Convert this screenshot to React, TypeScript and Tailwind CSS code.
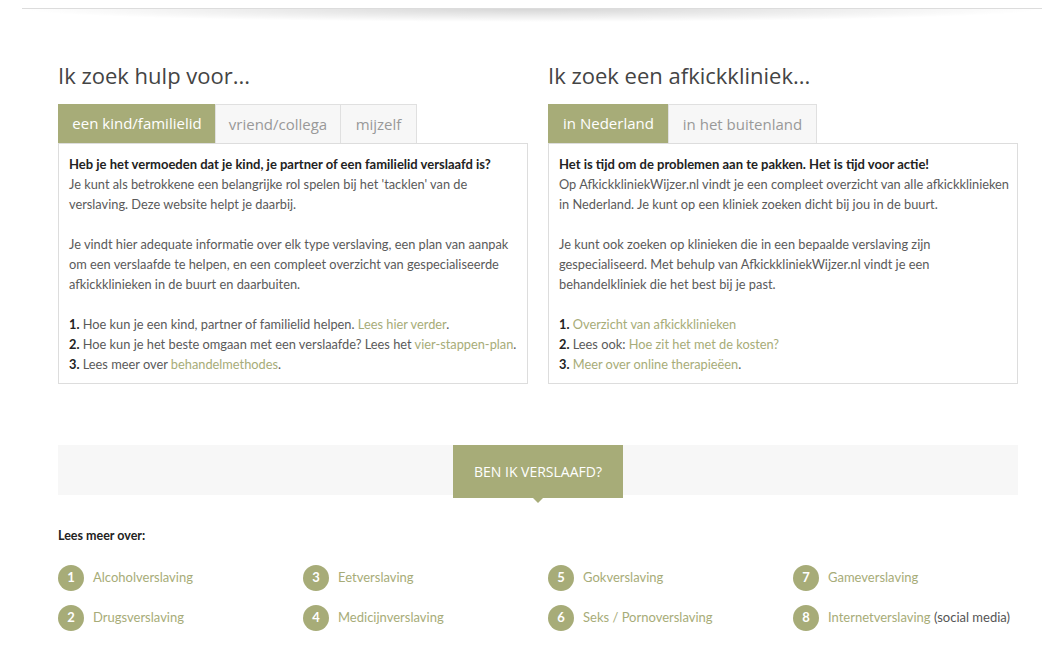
import React from 'react';

const green = 'text-[#a7ac78]';

function Tabs({ tabs }: { tabs: { label: string; w: string }[] }) {
  return (
    <div className="flex h-[39px] items-end">
      {tabs.map((t, i) =>
        i === 0 ? (
          <div
            key={t.label}
            className={`${t.w} flex h-[39px] items-center justify-center bg-[#a7ac78] text-[15px] text-white`}
          >
            {t.label}
          </div>
        ) : (
          <div
            key={t.label}
            className={`${t.w} -ml-px flex h-[39px] items-center justify-center border border-b-0 border-[#e0e0e0] bg-[#f7f7f7] text-[15px] text-[#999] first:ml-0`}
          >
            {t.label}
          </div>
        ),
      )}
    </div>
  );
}

function Box({ children }: { children: React.ReactNode }) {
  return (
    <div className="h-[241px] whitespace-nowrap border border-[#dddddd] px-[10px] pt-[10px] font-['Lato',sans-serif] text-[12.8px] leading-[20px] text-[#5a5a5a]">
      {children}
    </div>
  );
}

const items = [
  ['1', 'Alcoholverslaving', ''],
  ['3', 'Eetverslaving', ''],
  ['5', 'Gokverslaving', ''],
  ['7', 'Gameverslaving', ''],
  ['2', 'Drugsverslaving', ''],
  ['4', 'Medicijnverslaving', ''],
  ['6', 'Seks / Pornoverslaving', ''],
  ['8', 'Internetverslaving', ' (social media)'],
];

export default function App() {
  return (
    <div className="min-h-[657px] bg-white font-['Open_Sans',sans-serif]">
      <div className="flex justify-center pt-[8px]">
        <div className="h-[14px] w-[1020px] border-t border-[#dcdcdc] bg-[radial-gradient(ellipse_50%_100%_at_50%_0%,rgba(0,0,0,0.16),transparent)]" />
      </div>

      <div className="ml-[58px] w-[960px]">
        <div className="mt-[38px] grid grid-cols-2 gap-[20px]">
          <div>
            <h2 className="mb-[14px] text-[22px] leading-[30px] text-[#444]">Ik zoek hulp voor...</h2>
            <Tabs
              tabs={[
                { label: 'een kind/familielid', w: 'w-[158px]' },
                { label: 'vriend/collega', w: 'w-[126px]' },
                { label: 'mijzelf', w: 'w-[77px]' },
              ]}
            />
            <Box>
              <p className="text-[13px] font-bold text-[#222]">
                Heb je het vermoeden dat je kind, je partner of een familielid verslaafd is?
              </p>
              <p>
                Je kunt als betrokkene een belangrijke rol spelen bij het 'tacklen' van de
                <br />
                verslaving. Deze website helpt je daarbij.
              </p>
              <p className="mt-[20px]">
                Je vindt hier adequate informatie over elk type verslaving, een plan van aanpak
                <br />
                om een verslaafde te helpen, en een compleet overzicht van gespecialiseerde
                <br />
                afkickklinieken in de buurt en daarbuiten.
              </p>
              <p className="mt-[20px]">
                <b className="text-[#222]">1.</b> Hoe kun je een kind, partner of familielid helpen.{' '}
                <span className={green}>Lees hier verder</span>.
                <br />
                <b className="text-[#222]">2.</b> Hoe kun je het beste omgaan met een verslaafde? Lees het{' '}
                <span className={green}>vier-stappen-plan</span>.
                <br />
                <b className="text-[#222]">3.</b> Lees meer over <span className={green}>behandelmethodes</span>.
              </p>
            </Box>
          </div>

          <div>
            <h2 className="mb-[14px] text-[22px] leading-[30px] text-[#444]">Ik zoek een afkickkliniek...</h2>
            <Tabs
              tabs={[
                { label: 'in Nederland', w: 'w-[121px]' },
                { label: 'in het buitenland', w: 'w-[149px]' },
              ]}
            />
            <Box>
              <p className="text-[13px] font-bold text-[#222]">
                Het is tijd om de problemen aan te pakken. Het is tijd voor actie!
              </p>
              <p>
                Op AfkickkliniekWijzer.nl vindt je een compleet overzicht van alle afkickklinieken
                <br />
                in Nederland. Je kunt op een kliniek zoeken dicht bij jou in de buurt.
              </p>
              <p className="mt-[20px]">
                Je kunt ook zoeken op klinieken die in een bepaalde verslaving zijn
                <br />
                gespecialiseerd. Met behulp van AfkickkliniekWijzer.nl vindt je een
                <br />
                behandelkliniek die het best bij je past.
              </p>
              <p className="mt-[20px]">
                <b className="text-[#222]">1.</b> <span className={green}>Overzicht van afkickklinieken</span>
                <br />
                <b className="text-[#222]">2.</b> Lees ook: <span className={green}>Hoe zit het met de kosten?</span>
                <br />
                <b className="text-[#222]">3.</b> <span className={green}>Meer over online therapieëen</span>.
              </p>
            </Box>
          </div>
        </div>

        <div className="mt-[61px] flex h-[50px] bg-[#f7f7f7] pl-[395px]">
          <div className="relative flex h-[53px] w-[170px] items-center justify-center bg-[#a7ac78] text-[14px] text-white">
            BEN IK VERSLAAFD?
            <span className="absolute left-1/2 top-full -ml-[5px] h-0 w-0 border-x-[5px] border-t-[5px] border-x-transparent border-t-[#a7ac78]" />
          </div>
        </div>

        <p className="mt-[32px] font-['Lato',sans-serif] text-[12.5px] font-bold text-[#222]">Lees meer over:</p>

        <div className="mt-[19px] grid grid-cols-4 gap-x-[20px] gap-y-[14px] font-['Lato',sans-serif]">
          {items.map(([n, label, extra]) => (
            <div key={n} className="flex items-center gap-[9px]">
              <span className="flex h-[26px] w-[26px] items-center justify-center rounded-full bg-[#a7ac78] text-[13px] font-bold text-white">
                {n}
              </span>
              <span className="text-[13px]">
                <span className={green}>{label}</span>
                <span className="text-[#555]">{extra}</span>
              </span>
            </div>
          ))}
        </div>
      </div>
    </div>
  );
}
